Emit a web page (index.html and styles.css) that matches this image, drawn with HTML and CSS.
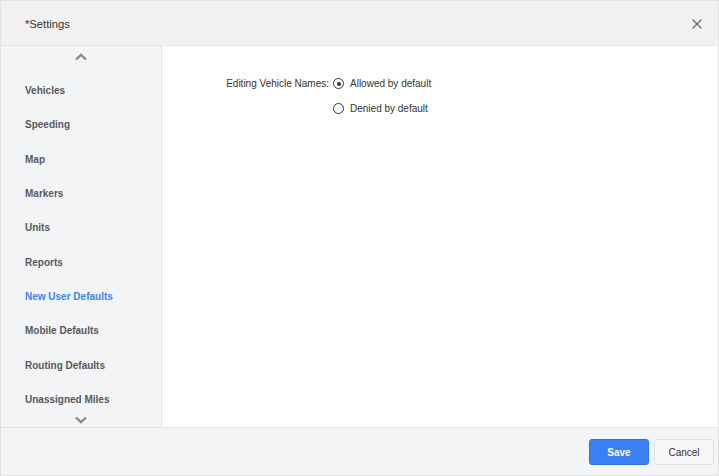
FILE: index.html
```html
<!DOCTYPE html>
<html>
<head>
<meta charset="utf-8">
<link rel="stylesheet" href="styles.css">
</head>
<body>
<div class="dialog">
  <div class="header">
    <div class="title">*Settings</div>
    <button class="close" aria-label="Close">
      <svg width="10" height="10" viewBox="0 0 10 10"><path d="M0.5 0.5L9.5 9.5M9.5 0.5L0.5 9.5" stroke="#6b6b6b" stroke-width="1.3" fill="none"/></svg>
    </button>
  </div>
  <div class="main">
    <nav class="sidebar">
      <div class="chev chev-up">
        <svg width="12" height="8" viewBox="0 0 12 8"><path d="M1 6.5L6 1.8L11 6.5" stroke="#8a8b8e" stroke-width="2.4" fill="none"/></svg>
      </div>
      <ul class="nav">
        <li>Vehicles</li>
        <li>Speeding</li>
        <li>Map</li>
        <li>Markers</li>
        <li>Units</li>
        <li>Reports</li>
        <li class="active">New User Defaults</li>
        <li>Mobile Defaults</li>
        <li>Routing Defaults</li>
        <li>Unassigned Miles</li>
      </ul>
      <div class="chev chev-down">
        <svg width="12" height="8" viewBox="0 0 12 8"><path d="M1 1.5L6 6.2L11 1.5" stroke="#8a8b8e" stroke-width="2.4" fill="none"/></svg>
      </div>
    </nav>
    <section class="content">
      <div class="form">
        <div class="label">Editing Vehicle Names:</div>
        <label class="radio"><span class="dot checked"></span>Allowed by default</label>
        <div class="label"></div>
        <label class="radio"><span class="dot"></span>Denied by default</label>
      </div>
    </section>
  </div>
  <div class="footer">
    <button class="btn btn-primary">Save</button>
    <button class="btn btn-default">Cancel</button>
  </div>
</div>
</body>
</html>
```
FILE: styles.css
```css
html, body {
  margin: 0;
  padding: 0;
  background: #ffffff;
}
body {
  font-family: "Liberation Sans", Arial, sans-serif;
  color: #333;
}
.dialog {
  width: 719px;
  height: 476px;
  box-sizing: border-box;
  border: 1px solid #e2e3e5;
  display: flex;
  flex-direction: column;
  background: #fff;
}
.header {
  height: 44px;
  border-bottom: 1px solid #e4e5e7;
  background: #f1f1f2;
  display: flex;
  align-items: center;
  justify-content: space-between;
  padding: 0 16px 0 24px;
  flex: none;
}
.title {
  font-size: 11.2px;
  color: #333;
  margin-top: 1px;
}
.close {
  background: none;
  border: 0;
  padding: 0;
  width: 10px;
  height: 10px;
  display: flex;
  margin-top: 1px;
}
.main {
  display: flex;
  height: 381px;
  flex: none;
}
.sidebar {
  width: 160px;
  border-right: 1px solid #e4e5e7;
  background: #f3f4f6;
  display: flex;
  flex-direction: column;
}
.chev {
  display: flex;
  justify-content: center;
  align-items: center;
  width: 160px;
}
.chev-up {
  height: 22px;
}
.chev-down {
  height: 5px;
}
.nav {
  list-style: none;
  margin: 6px 0 0 0;
  padding: 0;
}
.nav li {
  height: 34.33px;
  line-height: 34.33px;
  padding-left: 24px;
  font-size: 10px;
  font-weight: bold;
  color: #58595b;
  white-space: nowrap;
}
.nav li.active {
  color: #3b84f6;
}
.content {
  flex: 1;
  background: #fff;
  padding-top: 25px;
}
.form {
  display: grid;
  grid-template-columns: 167px auto;
  column-gap: 4px;
  grid-auto-rows: 25px;
  align-items: center;
  font-size: 10px;
  color: #333;
}
.label {
  text-align: right;
}
.radio {
  display: flex;
  align-items: center;
  gap: 6px;
}
.dot {
  width: 11px;
  height: 11px;
  box-sizing: border-box;
  border: 1.5px solid #333;
  border-radius: 50%;
  display: inline-flex;
  align-items: center;
  justify-content: center;
}
.dot.checked::after {
  content: "";
  width: 4px;
  height: 4px;
  border-radius: 50%;
  background: #333;
}
.footer {
  flex: 1;
  border-top: 1px solid #e4e5e7;
  background: #f3f4f6;
  display: flex;
  justify-content: flex-end;
  align-items: flex-start;
  padding: 11px 4px 0 0;
  gap: 5px;
}
.btn {
  height: 26px;
  width: 60px;
  font-family: "Liberation Sans", Arial, sans-serif;
  font-size: 10px;
  border-radius: 3px;
  box-sizing: border-box;
  padding: 0;
  cursor: pointer;
}
.btn-primary {
  background: #3c80f5;
  border: 1px solid #2f72e6;
  color: #fff;
  font-weight: bold;
}
.btn-default {
  background: #f7f7f8;
  border: 1px solid #dfe0e2;
  color: #333;
}
```
